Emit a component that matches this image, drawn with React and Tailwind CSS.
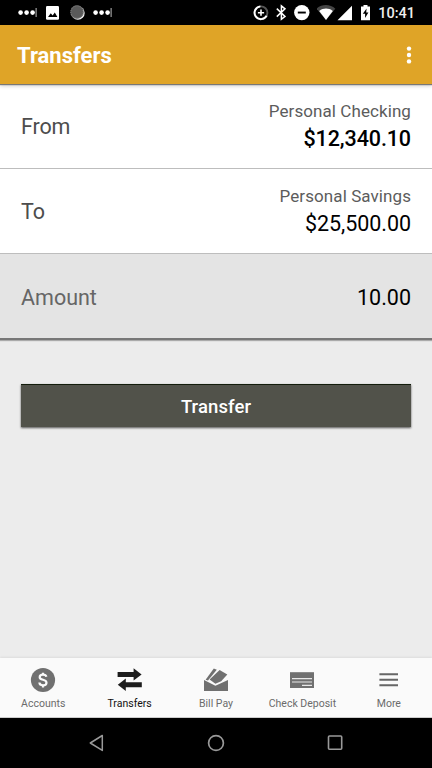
function NotificationDots({ className }) {
  return (
    <svg className={className} width="20" height="25" viewBox="0 0 20 25" fill="#fff">
      <circle cx="2.6" cy="12.6" r="2.3" />
      <circle cx="8.6" cy="12.6" r="2.3" />
      <circle cx="14.6" cy="12.6" r="2.3" />
      <rect x="17.6" y="8" width="1" height="9" fill="#bbb" />
    </svg>
  );
}

function StatusBar() {
  return (
    <div className="flex h-[25px] items-center bg-black pl-[18px] pr-[17px]">
      <NotificationDots />
      <svg className="ml-[8px]" width="13" height="25" viewBox="0 0 13 25">
        <rect x="0" y="6" width="13" height="13.7" rx="1.2" fill="#fff" />
        <path d="M2 17 L4.8 13.3 L6.6 15.4 L8.8 12.4 L11.4 17 Z" fill="#000" />
      </svg>
      <svg className="ml-[11px]" width="15" height="25" viewBox="0 0 15 25">
        <circle cx="7.9" cy="13" r="6.8" fill="#f2f2f2" />
        <circle cx="7" cy="12" r="6.7" fill="#5a5a5a" />
        <circle cx="7" cy="12" r="6.2" fill="none" stroke="#8a8a8a" strokeWidth="1" strokeDasharray="1 1" />
      </svg>
      <NotificationDots className="ml-[8px]" />
      <div className="flex-1" />
      <svg width="16" height="25" viewBox="0 0 16 25" fill="none">
        <circle cx="8" cy="12.8" r="6.4" stroke="#555" strokeWidth="1.9" />
        <path d="M7.4 6.4 A6.4 6.4 0 1 0 13.6 15.8" stroke="#fff" strokeWidth="1.9" />
        <path d="M8 9.6 V15.8 M4.9 12.7 H11.1" stroke="#fff" strokeWidth="1.6" />
      </svg>
      <svg className="ml-[7px]" width="11" height="25" viewBox="0 0 11 25" fill="none" stroke="#fff" strokeWidth="1.5">
        <path d="M0.8 8.6 L9 16.4 L5.4 19.3 V5.9 L9 8.9 L0.8 16.6" />
      </svg>
      <svg className="ml-[7px]" width="16" height="25" viewBox="0 0 16 25">
        <circle cx="7.8" cy="12.6" r="7.7" fill="#fff" />
        <rect x="3.8" y="11.6" width="8" height="1.9" fill="#000" />
      </svg>
      <svg className="ml-[7px]" width="20" height="25" viewBox="0 0 20 25">
        <path d="M-0.4 8.7 C4.6 3.9 13.2 3.9 18.3 8.7 L9 20 Z" fill="#444" />
        <path d="M2.2 11 C6.4 7.8 11.6 7.8 15.8 11 L9 20 Z" fill="#fff" />
      </svg>
      <svg width="16" height="25" viewBox="0 0 16 25">
        <path d="M15 5.7 V20.3 H0.5 Z" fill="#fff" />
      </svg>
      <svg className="ml-[8px]" width="9" height="25" viewBox="0 0 9 25">
        <path d="M2.5 5 H6.5 V6.5 H9 V20.3 H0 V6.5 H2.5 Z" fill="#fff" />
        <path d="M5.6 8.5 L1.8 13.8 H4.1 V18 L7.4 12.4 H5.2 Z" fill="#000" />
      </svg>
      <span className="ml-[7px] w-[38px] whitespace-nowrap pt-[2px] text-right text-[14.5px] font-medium leading-[25px] text-[#eee]">10:41</span>
    </div>
  );
}

function AccountRow({ label, name, amount, strong }) {
  return (
    <div className="flex h-[85px] items-center justify-between border-b border-[#bdbdbd] bg-white px-[21px]">
      <span className="pt-[2px] text-[21.5px] leading-6 tracking-[-0.15px] text-[#4d4d4d]">{label}</span>
      <div className="flex flex-col items-end pb-[1px]">
        <span className="text-[17px] leading-[25px] tracking-[0.08px] text-[#5c5c5c]">{name}</span>
        <span className={strong ? "text-[21.5px] font-medium leading-[29px] tracking-[-0.1px] text-black" : "text-[21.5px] leading-[29px] tracking-[-0.05px] text-black"}>
          {amount}
        </span>
      </div>
    </div>
  );
}

function Tab({ label, active, children }) {
  return (
    <div className={active ? "flex flex-1 flex-col items-center text-[#111]" : "flex flex-1 flex-col items-center text-[#6b6b6b]"}>
      <svg className="mt-[9px]" width="26" height="26" viewBox="0 0 26 26">{children}</svg>
      <span className="mt-[3px] whitespace-nowrap text-[10.5px] leading-[15px]">{label}</span>
    </div>
  );
}

export default function App() {
  return (
    <div className="flex h-[768px] w-[432px] flex-col overflow-hidden bg-[#ececec] font-[Roboto,sans-serif]">
      <StatusBar />
      <header className="relative flex h-[59px] items-center justify-between bg-[#dfa427] pl-[17px] pr-5 shadow-[0_1px_1px_#777f,0_2px_4px_#0003]">
        <h1 className="pt-[2px] text-[22px] font-bold leading-7 text-white">Transfers</h1>
        <svg width="6" height="20" viewBox="0 0 6 20" fill="#fff">
          <circle cx="3" cy="3.6" r="2.2" />
          <circle cx="3" cy="10" r="2.2" />
          <circle cx="3" cy="16.4" r="2.2" />
        </svg>
      </header>
      <AccountRow label="From" name="Personal Checking" amount="$12,340.10" strong />
      <AccountRow label="To" name="Personal Savings" amount="$25,500.00" />
      <div className="flex h-[86px] items-center justify-between border-b-2 border-[#777] bg-[#e4e4e4] px-[21px] shadow-[0_1px_1px_#aaa]">
        <span className="pt-[3px] text-[21.5px] leading-6 text-[#666]">Amount</span>
        <span className="pt-[3px] text-[21.5px] leading-6 text-black">10.00</span>
      </div>
      <button className="mx-[21px] mt-[44px] h-[43px] border-t border-[#131c0c] bg-[#51524a] pt-[3px] text-[18.5px] font-medium tracking-[0.1px] text-white shadow-[0_1px_2px_#555]">
        Transfer
      </button>
      <div className="flex-1" />
      <nav className="flex h-[60px] border-b border-[#ccc] bg-[#fafafa] shadow-[0_-1px_2px_#0001]">
        <Tab label="Accounts">
          <circle cx="13" cy="13" r="12.1" fill="#707070" />
          <path d="M16.4 9.8 C16 8.3 14.7 7.7 13 7.7 C11.1 7.7 9.7 8.6 9.7 10.2 C9.7 13.6 16.5 12 16.5 15.7 C16.5 17.4 15 18.3 13 18.3 C11 18.3 9.5 17.4 9.4 15.5 M13 5.7 V8 M13 18 V20.4" fill="none" stroke="#fafafa" strokeWidth="2.2" />
        </Tab>
        <Tab label="Transfers" active>
          <path d="M0.6 5 H16.6 V1.2 L24.6 7.4 L16.6 13.4 V9.9 H0.6 Z M24.8 15.3 H8.8 V11.6 L0.8 17.8 L8.8 24 V20.3 H24.8 Z" fill="#1c1c1c" />
        </Tab>
        <Tab label="Bill Pay">
          <path d="M1 13 L12.4 18.8 L25 13 V24 H1 Z" fill="#707070" />
          <path d="M2.6 12.8 L10.8 1.6 L13.8 2.8 L5 13.4 Z" fill="#707070" />
          <path d="M6.6 12.6 L16.6 3 L24.3 7.4 L18.2 14.2 L12.4 16.8 Z" fill="#707070" stroke="#fafafa" strokeWidth="1.2" paintOrder="stroke" />
        </Tab>
        <Tab label="Check Deposit">
          <rect x="1" y="5.2" width="24" height="15.8" fill="#707070" />
          <path d="M3 11.7 H23 M3 15 H23 M13 18.3 H23" stroke="#e8e8e8" strokeWidth="1.2" />
        </Tab>
        <Tab label="More">
          <path d="M3.4 7.2 H22 M3.4 12.8 H22 M3.4 18.3 H22" stroke="#666" strokeWidth="1.9" />
        </Tab>
      </nav>
      <div className="flex h-[50px] items-center justify-between bg-black pl-[88px] pr-[88px]">
        <svg width="17" height="20" viewBox="0 0 17 20" fill="none" stroke="#999" strokeWidth="1.5" strokeLinejoin="round">
          <path d="M14.3 2.5 V17.4 L2.3 10 Z" />
        </svg>
        <svg width="18" height="18" viewBox="0 0 18 18" fill="none" stroke="#999" strokeWidth="1.7">
          <circle cx="9" cy="9" r="7.4" />
        </svg>
        <svg width="18" height="18" viewBox="0 0 18 18" fill="none" stroke="#999" strokeWidth="1.6">
          <rect x="2.5" y="2" width="13.2" height="13.2" rx="1" />
        </svg>
      </div>
    </div>
  );
}
